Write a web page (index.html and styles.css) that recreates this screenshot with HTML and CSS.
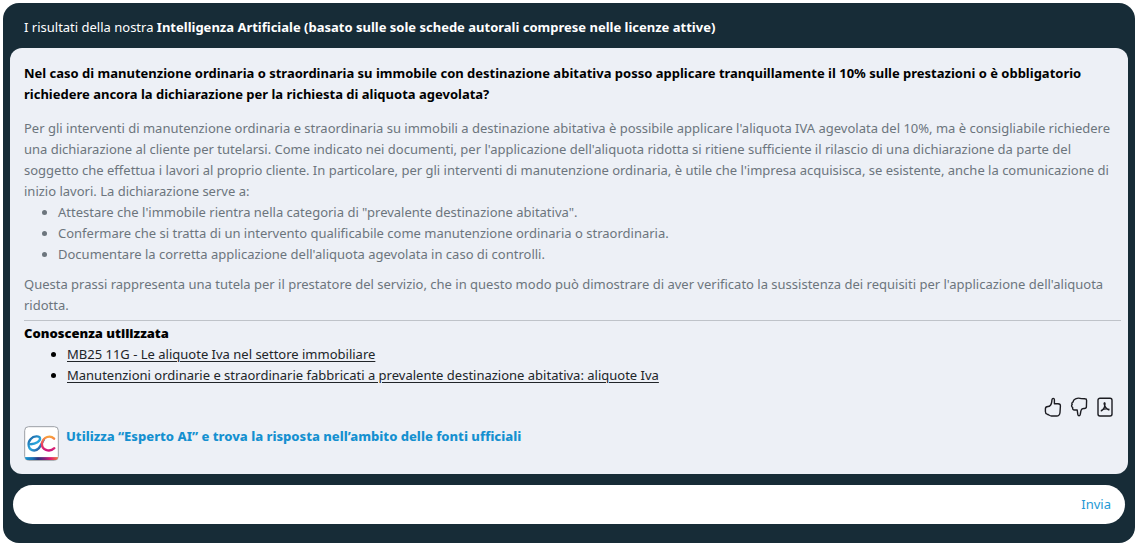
FILE: index.html
```html
<!DOCTYPE html>
<html lang="it">
<head>
    <meta charset="UTF-8">
    <meta name="viewport" content="width=device-width, initial-scale=1.0">
    <title>Intelligenza Artificiale</title>
    <link rel="stylesheet" href="styles.css">
</head>
<body>
    <main class="ai-panel">
        <header class="ai-header">I risultati della nostra <strong>Intelligenza Artificiale (basato sulle sole schede autorali comprese nelle licenze attive)</strong></header>

        <section class="card">
            <h1 class="question">Nel caso di manutenzione ordinaria o straordinaria su immobile con destinazione abitativa posso applicare tranquillamente il 10% sulle prestazioni o è obbligatorio richiedere ancora la dichiarazione per la richiesta di aliquota agevolata?</h1>

            <div class="answer">
                <p>Per gli interventi di manutenzione ordinaria e straordinaria su immobili a destinazione abitativa è possibile applicare l'aliquota IVA agevolata del 10%, ma è consigliabile richiedere una dichiarazione al cliente per tutelarsi. Come indicato nei documenti, per l'applicazione dell'aliquota ridotta si ritiene sufficiente il rilascio di una dichiarazione da parte del soggetto che effettua i lavori al proprio cliente. In particolare, per gli interventi di manutenzione ordinaria, è utile che l'impresa acquisisca, se esistente, anche la comunicazione di inizio lavori. La dichiarazione serve a:</p>
                <ul>
                    <li>Attestare che l'immobile rientra nella categoria di "prevalente destinazione abitativa".</li>
                    <li>Confermare che si tratta di un intervento qualificabile come manutenzione ordinaria o straordinaria.</li>
                    <li>Documentare la corretta applicazione dell'aliquota agevolata in caso di controlli.</li>
                </ul>
                <p>Questa prassi rappresenta una tutela per il prestatore del servizio, che in questo modo può dimostrare di aver verificato la sussistenza dei requisiti per l'applicazione dell'aliquota ridotta.</p>
            </div>

            <div class="sources">
                <h2>Conoscenza utilizzata</h2>
                <ul>
                    <li><a href="#">MB25 11G - Le aliquote Iva nel settore immobiliare</a></li>
                    <li><a href="#">Manutenzioni ordinarie e straordinarie fabbricati a prevalente destinazione abitativa: aliquote Iva</a></li>
                </ul>
            </div>

            <div class="actions">
                <button type="button" aria-label="Mi piace">
                    <svg viewBox="0 0 18 20"><path d="M6.5 8.2C8 6.5 7.6 5 8 2.6C8.3 .9 10.3 1 10.4 2.8V6.8H14C15.8 6.8 16.5 7.6 16.4 9L16 15.5C15.8 18 14.6 19 12.5 19H7.5C5.5 19 4.8 17.6 3.2 17.2C2 16.8 1.4 15.8 1.4 14.4V11.8C1.4 10 2.4 9.5 4 9.5C5.2 9.5 5.8 9 6.5 8.2Z"/></svg>
                </button>
                <button type="button" aria-label="Non mi piace">
                    <svg viewBox="0 0 18 20"><path d="M12.2 11.8C10.8 12.8 10.6 14.8 10.3 17.3C10.1 19.4 8.1 19.2 7.8 17.3L7.2 13H4.6C3 13 2.4 12 2.7 10.6C1.5 10 1.2 8.5 2.2 7.6C1.5 6.5 2 5.2 3.2 4.9C3 3.4 4 2.4 5.5 1.8C7.5 1 9.5 1 11.3 1.6L15 1.8C16.2 1.8 16.6 2.5 16.6 3.5L16.4 9.8C16.4 11 15.6 11.5 14.4 11.5C13.4 11.5 12.8 11.4 12.2 11.8Z"/></svg>
                </button>
                <button type="button" aria-label="Scarica PDF">
                    <svg viewBox="0 0 18 20"><rect x="2" y="1.2" width="14" height="17.8" rx="2"/><path d="M5 14.2C7.4 12.8 9 10 9 6.8C9 5.4 8 5.6 8.2 6.8C8.6 9.4 10.4 11.8 13.4 13.2M5 14.2C5.6 12.2 9.5 11.2 13.4 12.3"/></svg>
                </button>
            </div>

            <a class="expert" href="#">
                <svg class="logo" viewBox="0 0 36 36">
                    <defs>
                        <linearGradient id="e" x1="0" x2="1" y1="0" y2="1">
                            <stop offset="0" stop-color="#1c5c9f"/>
                            <stop offset=".5" stop-color="#28a9df"/>
                            <stop offset="1" stop-color="#2a3587"/>
                        </linearGradient>
                        <linearGradient id="c" x1="0" x2="0" y1="0" y2="1">
                            <stop offset="0" stop-color="#f9a13c"/>
                            <stop offset=".5" stop-color="#f0465a"/>
                            <stop offset="1" stop-color="#ce157f"/>
                        </linearGradient>
                        <linearGradient id="bar">
                            <stop offset="0" stop-color="#149bd3"/>
                            <stop offset=".25" stop-color="#1a6eb4"/>
                            <stop offset=".4" stop-color="#28327e"/>
                            <stop offset=".6" stop-color="#85207b"/>
                            <stop offset=".75" stop-color="#dc1c72"/>
                            <stop offset="1" stop-color="#f08535"/>
                        </linearGradient>
                        <clipPath id="tile"><rect x="1" y="1" width="34" height="34" rx="4"/></clipPath>
                    </defs>
                    <rect x=".7" y=".7" width="34.6" height="34.6" rx="4" fill="#fff" stroke="#999da3"/>
                    <rect y="32" width="36" height="4" fill="url(#bar)" clip-path="url(#tile)"/>
                    <path d="M7 18.8C12 18.5 17 15.5 16.5 12.5C16 10 10 10 7 13.3C3.2 17.3 4 25 10.5 25.2C16.5 25.2 17.5 18 20.5 14" fill="none" stroke="url(#e)" stroke-width="2.4" stroke-linecap="round"/>
                    <path d="M31 13C27 9 20 11 18.5 17.5C17.8 24.5 26 27.5 31.2 22.8" fill="none" stroke="url(#c)" stroke-width="2.4" stroke-linecap="round"/>
                </svg>
                <span>Utilizza “Esperto AI” e trova la risposta nell’ambito delle fonti ufficiali</span>
            </a>
        </section>

        <form class="ask">
            <input type="text" aria-label="Scrivi una domanda">
            <button type="submit">Invia</button>
        </form>
    </main>
</body>
</html>
```

FILE: styles.css
```css
* {
    box-sizing: border-box;
}
body {
    margin: 3px 2px 5px 3px;
    background: #fff;
    font-family: "Noto Sans", "Open Sans", sans-serif;
    font-size: 13px;
    line-height: 21px;
}
h1, h2, p, ul {
    margin: 0;
    font-size: 13px;
}
h2 {
    font-weight: 900;
}
button {
    padding: 0;
    border: 0;
    background: none;
    font: inherit;
    cursor: pointer;
}
.ai-panel {
    padding: 0 7px 19px;
    border-radius: 16px;
    background: #172c37;
}
.ai-header {
    padding: 14px 14px 10px;
    color: #fff;
}
.card {
    padding: 15px 7px 13px 14px;
    border-radius: 12px;
    background: #edf0f6;
}
.question {
    margin-bottom: 13px;
    color: #000;
}
.answer {
    padding-bottom: 4px;
    border-bottom: 1px solid #bfc3c9;
    color: #6c757d;
}
.answer ul {
    margin-bottom: 9px;
    padding-left: 34px;
}
.sources {
    padding-top: 2px;
    color: #000;
}
.sources ul {
    padding-left: 43px;
}
.sources a {
    color: #212529;
    text-underline-offset: 2px;
}
.actions {
    display: flex;
    justify-content: flex-end;
    gap: 8px;
    margin-top: 11px;
    padding-right: 7px;
}
.actions svg {
    display: block;
    width: 18px;
    height: 20px;
    fill: none;
    stroke: #1c1c22;
    stroke-width: 1.4;
    stroke-linejoin: round;
}
.expert {
    display: flex;
    gap: 7px;
    margin-top: 9px;
    color: #1590d0;
    font-weight: 800;
    text-decoration: none;
}
.logo {
    width: 35px;
    height: 35px;
}
.ask {
    display: flex;
    margin: 11px 3px 0;
    padding-right: 14px;
    border-radius: 20px;
    background: #fff;
}
.ask input {
    flex: 1;
    height: 39px;
    padding: 0 20px;
    border: 0;
    outline: 0;
    background: none;
    font: inherit;
}
.ask button {
    color: #2499d5;
}
```
